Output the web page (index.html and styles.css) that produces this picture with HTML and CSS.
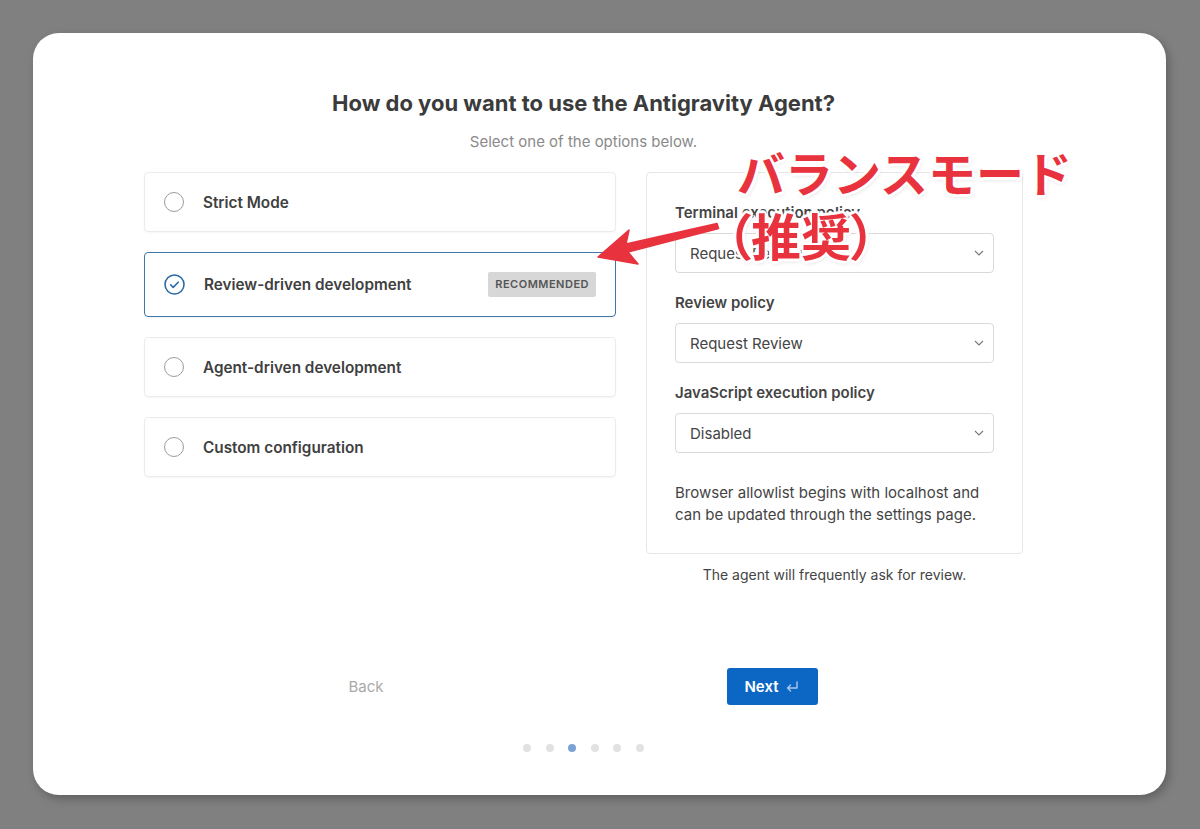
FILE: index.html
```html
<!DOCTYPE html>
<html lang="en">

<head>
    <meta charset="UTF-8">
    <meta name="viewport" content="width=device-width, initial-scale=1.0">
    <title>Antigravity Agent Setup</title>
    <link rel="stylesheet" href="styles.css">
</head>

<body>

    <div class="window">
        <div class="content">
            <h1>How do you want to use the Antigravity Agent?</h1>
            <p class="subtitle">Select one of the options below.</p>

            <div class="columns">
                <div class="options">
                    <div class="option">
                        <span class="radio"></span>
                        <span class="option-label">Strict Mode</span>
                    </div>
                    <div class="option selected">
                        <span class="radio checked">
                            <svg width="21" height="21" viewBox="0 0 21 21">
                                <circle cx="10.5" cy="10.5" r="9.5" fill="none" stroke="#2c6aa6" stroke-width="1.6" />
                                <path d="M6.6 10.8l2.6 2.6 5-5.2" fill="none" stroke="#2c6aa6" stroke-width="1.6"
                                    stroke-linecap="round" stroke-linejoin="round" />
                            </svg>
                        </span>
                        <span class="option-label">Review-driven development</span>
                        <span class="badge">RECOMMENDED</span>
                    </div>
                    <div class="option">
                        <span class="radio"></span>
                        <span class="option-label">Agent-driven development</span>
                    </div>
                    <div class="option">
                        <span class="radio"></span>
                        <span class="option-label">Custom configuration</span>
                    </div>
                </div>

                <div class="details">
                    <div class="panel">
                        <div class="field">
                            <label>Terminal execution policy</label>
                            <div class="select">
                                <span>Request Review</span>
                                <svg width="10" height="6" viewBox="0 0 10 6"><path d="M1 1l4 4 4-4" fill="none" stroke="#777" stroke-width="1.1" /></svg>
                            </div>
                        </div>
                        <div class="field">
                            <label>Review policy</label>
                            <div class="select">
                                <span>Request Review</span>
                                <svg width="10" height="6" viewBox="0 0 10 6"><path d="M1 1l4 4 4-4" fill="none" stroke="#777" stroke-width="1.1" /></svg>
                            </div>
                        </div>
                        <div class="field">
                            <label>JavaScript execution policy</label>
                            <div class="select">
                                <span>Disabled</span>
                                <svg width="10" height="6" viewBox="0 0 10 6"><path d="M1 1l4 4 4-4" fill="none" stroke="#777" stroke-width="1.1" /></svg>
                            </div>
                        </div>
                        <p class="note">Browser allowlist begins with localhost and can be updated through the settings page.</p>
                    </div>
                    <p class="summary">The agent will frequently ask for review.</p>
                </div>
            </div>

            <div class="actions">
                <button class="back">Back</button>
                <button class="next">Next
                    <svg width="16" height="14" viewBox="0 0 16 14">
                        <path d="M13 2v6H3.5M6.5 5L3.5 8l3 3" fill="none" stroke="#a9c8ee" stroke-width="1.4"
                            stroke-linecap="round" stroke-linejoin="round" />
                    </svg>
                </button>
            </div>

            <div class="dots">
                <span class="dot"></span>
                <span class="dot"></span>
                <span class="dot active"></span>
                <span class="dot"></span>
                <span class="dot"></span>
                <span class="dot"></span>
            </div>
        </div>

        <!-- red callout pointing at the recommended option -->
        <svg class="callout-arrow" width="135" height="52" viewBox="590 218 135 52">
            <polygon points="598,257 629,230 626,244 717,223.6 718.6,228.4 628,252 638,264" fill="#e8333e"
                stroke="#e8333e" stroke-width="1.5" stroke-linejoin="round" />
        </svg>
        <div class="callout">バランスモード<br><span class="callout-sub">（推奨）</span></div>
    </div>

</body>

</html>
```

FILE: styles.css
```css
body {
    margin: 0;
    padding: 33px 34px 34px 33px;
    background: #808080;
    font-family: 'Inter', 'Liberation Sans', sans-serif;
}

.window {
    position: relative;
    height: 762px;
    background: white;
    border-radius: 26px;
    box-shadow: 3px 4px 10px rgba(0, 0, 0, 0.25);
}

.content {
    width: 879px;
    padding: 56px 0 0 111px;
}

h1 {
    margin: 0;
    font-size: 22px;
    line-height: 28px;
    font-weight: bold;
    text-align: center;
    color: #3b3b3b;
}

.subtitle {
    margin: 15px 0 20px;
    font-size: 15px;
    line-height: 20px;
    text-align: center;
    color: #8a8a8a;
}

.columns {
    display: flex;
    gap: 30px;
    align-items: flex-start;
}

.options {
    width: 472px;
    display: flex;
    flex-direction: column;
    gap: 20px;
}

.option {
    display: flex;
    align-items: center;
    height: 58px;
    padding: 0 19px;
    border: 1px solid #ebebeb;
    border-radius: 4px;
    box-shadow: 0 1px 2px rgba(0, 0, 0, 0.04);
}

.option.selected {
    height: 63px;
    border-color: #3c77a9;
}

.radio {
    width: 18px;
    height: 18px;
    border: 1.5px solid #9c9c9c;
    border-radius: 50%;
    margin-right: 19px;
    flex-shrink: 0;
}

.radio.checked {
    width: 21px;
    height: 21px;
    border: none;
}

.radio svg {
    display: block;
}

.option-label {
    flex: 1;
    font-size: 15.3px;
    font-weight: 600;
    color: #404040;
}

.badge {
    background: #d7d7d7;
    color: #555;
    font-size: 11px;
    font-weight: 600;
    letter-spacing: 0.5px;
    padding: 0 7px;
    line-height: 25px;
    border-radius: 2px;
}

.details {
    width: 377px;
}

.panel {
    border: 1px solid #e6e6e6;
    border-radius: 4px;
    padding: 20px 28px 17px;
}

.field label {
    display: block;
    font-size: 15px;
    font-weight: 600;
    line-height: 20px;
    color: #444;
    margin: 10px 0 10px;
}

.field + .field label {
    margin-top: 20px;
}

.select {
    display: flex;
    align-items: center;
    justify-content: space-between;
    height: 38px;
    padding: 0 9px 0 14px;
    border: 1px solid #d9d9d9;
    border-radius: 4px;
    font-size: 15px;
    color: #444;
}

.note {
    margin: 29px 0 10px;
    font-size: 15px;
    line-height: 22px;
    color: #444;
}

.summary {
    margin: 12px 0 0;
    font-size: 14px;
    line-height: 18px;
    text-align: center;
    color: #444;
}

.actions {
    display: flex;
    justify-content: center;
    gap: 315px;
    margin-top: 84px;
    padding-right: 29px;
}

button {
    width: 91px;
    height: 37px;
    border: none;
    border-radius: 3px;
    font-family: inherit;
    font-size: 15px;
    padding: 0;
}

.back {
    background: none;
    color: #a9a9a9;
}

.next {
    background: #0b67c3;
    color: white;
    font-weight: 600;
    display: flex;
    align-items: center;
    justify-content: center;
    gap: 5px;
}

.dots {
    display: flex;
    justify-content: center;
    gap: 14.6px;
    margin-top: 39px;
}

.dot {
    width: 8px;
    height: 8px;
    border-radius: 50%;
    background: #e2e2e2;
}

.dot.active {
    background: #7ba2d6;
}

.callout-arrow {
    position: absolute;
    left: 557px;
    top: 185px;
}

.callout {
    position: absolute;
    left: 704px;
    top: 107px;
    font-family: 'Noto Sans CJK JP', sans-serif;
    font-weight: bold;
    font-size: 48px;
    line-height: 63px;
    color: #e8333e;
    text-shadow: 0 0 2px white, 3px 0 1px white, -3px 0 1px white, 0 3px 1px white, 0 -3px 1px white,
        2px 2px 1px white, -2px -2px 1px white, 2px -2px 1px white, -2px 2px 1px white, 1px 2px 5px rgba(0, 0, 0, 0.2);
}

.callout-sub {
    font-size: 50px;
    font-feature-settings: "palt";
    margin-left: -11px;
}
```
